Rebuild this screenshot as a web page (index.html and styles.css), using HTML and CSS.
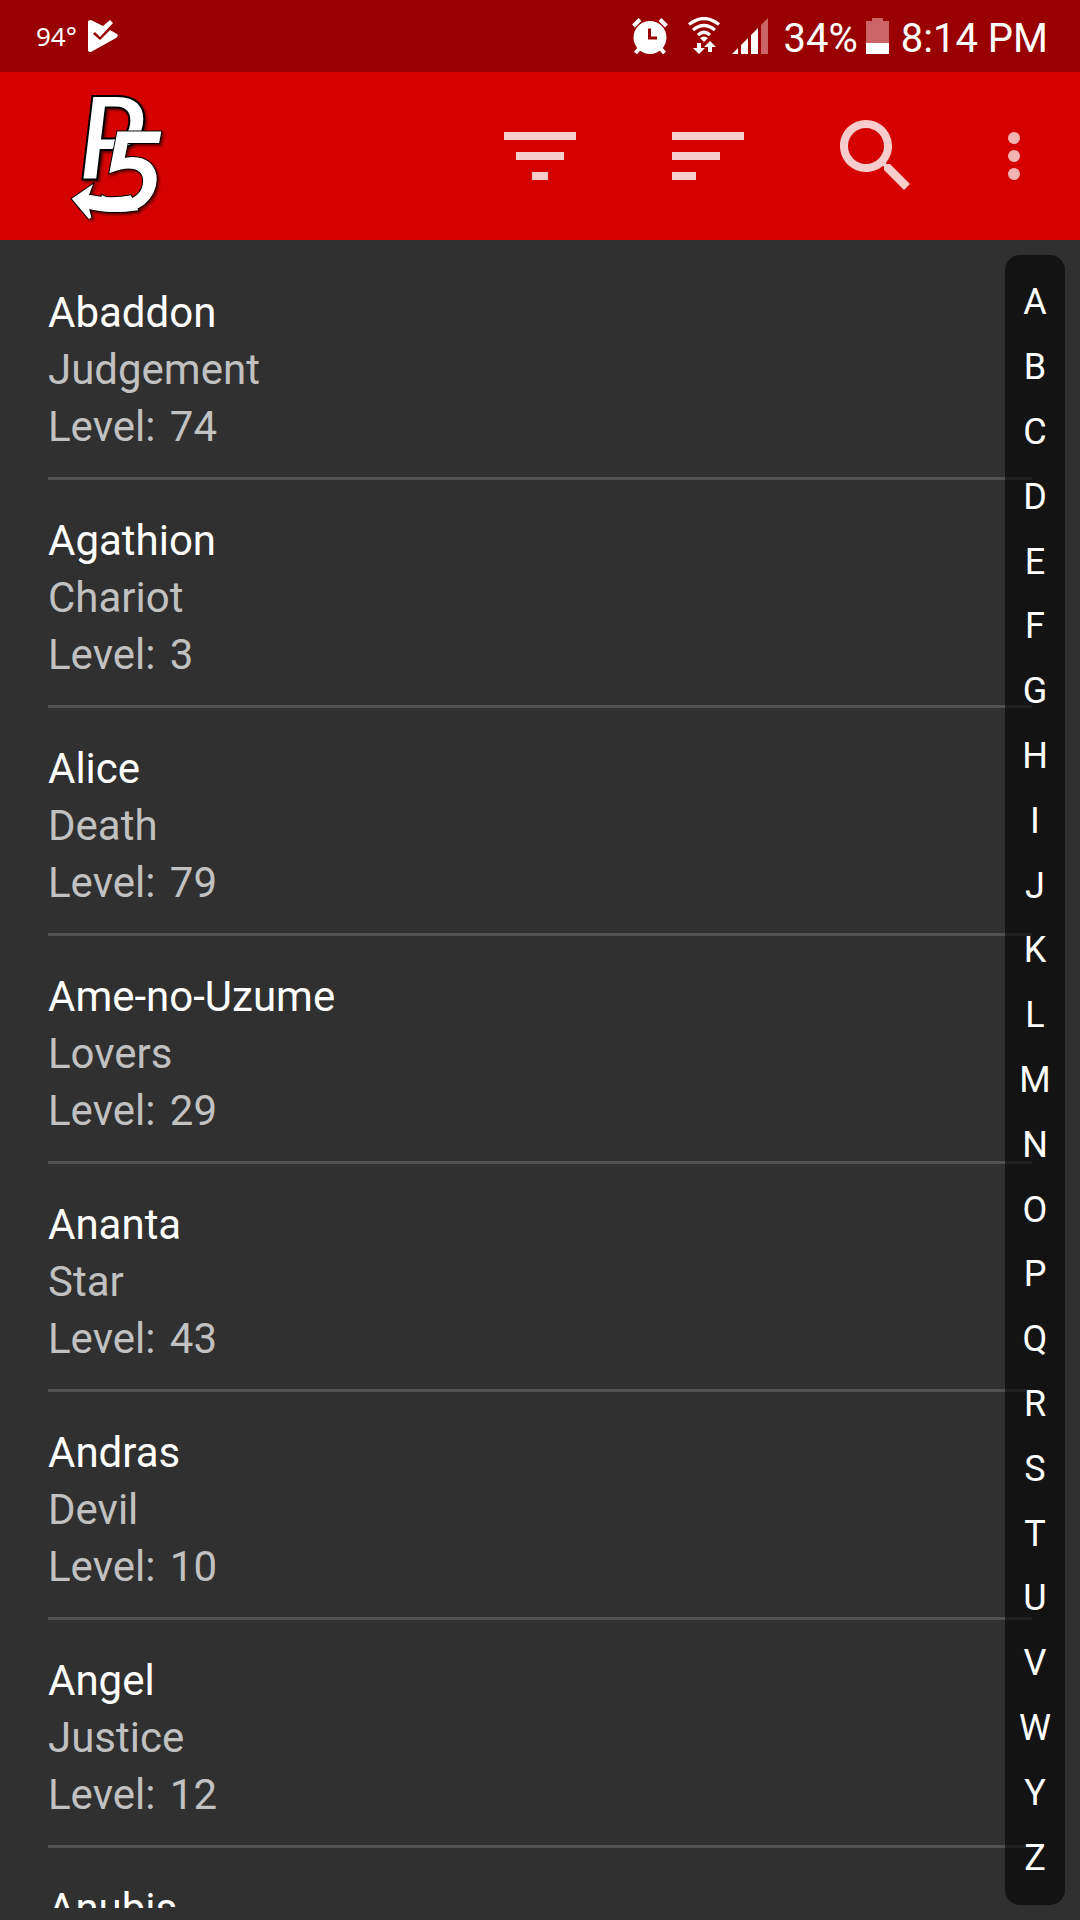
FILE: index.html
```html
<!DOCTYPE html>
<html lang="en">
<head>
  <meta charset="UTF-8" />
  <meta name="viewport" content="width=device-width, initial-scale=1.0" />
  <title>Personas</title>
  <link rel="stylesheet" href="styles.css">
</head>
<body>

  <div class="status-bar">
    <span class="temperature">94°</span>
    <svg class="play" width="30" height="32" viewBox="0 0 30 32">
      <path d="M0 2Q0 0 3 0L15 6L22 0L25 3L12 17L7 12L5 14L12 20L22 10L29 14Q31 16 28 18L3 32Q0 32 0 30Z" fill="#fff" />
    </svg>
    <div class="status-right">
      <svg class="alarm" width="36" height="36" viewBox="0 0 36 36">
        <circle cx="18" cy="19.500" r="16.500" fill="#fff" />
        <path d="M1.500 8L8 1.500M28 1.500L34.500 8M7 31L3.500 35M29 31L32.500 35" stroke="#fff" stroke-width="4" />
        <path d="M17.500 10.500V20H25" fill="none" stroke="#900" stroke-width="3" />
      </svg>
      <svg class="wifi" width="32" height="38" viewBox="0 0 32 38">
        <path d="M1 7.500Q16 -4.500 31 7.500M5 13Q16 4 27 13M10 18Q16 12.500 22 18" fill="none" stroke="#fff" stroke-width="3.200" />
        <path d="M12 21Q16 18 20 21L16 25ZM9 26H13V31H17L11 37L5 31H9ZM20 35V30H16L22 24L28 30H24V35Z" fill="#fff" />
      </svg>
      <svg class="signal" width="36" height="36" viewBox="0 0 36 36">
        <path d="M0 36L6 30V36ZM9 27L16 20V36H9ZM19 17L26 10V36H19Z" fill="#fff" />
        <path d="M29 7L36 0V36H29Z" fill="#c66" />
      </svg>
      <span class="status-text">34%</span>
      <svg class="battery" width="23" height="36" viewBox="0 0 23 36">
        <path d="M6 0H17V3H23V25H0V3H6Z" fill="#c66" />
        <path d="M0 25H23V36H0Z" fill="#fff" />
      </svg>
      <span class="status-text">8:14 PM</span>
    </div>
  </div>

  <header class="app-bar">
    <svg class="logo" width="120" height="140" viewBox="0 0 120 140" role="img" aria-label="P5">
      <defs>
        <g id="five">
          <text x="39" y="123">5</text>
          <path d="M14 113L30 102L27 110Q50 115 70 111L76 123Q50 127 27 121L30 132Z" />
        </g>
      </defs>
      <text class="logo-p" x="18" y="93">P</text>
      <use href="#five" class="logo-five outline" />
      <use href="#five" class="logo-five" />
    </svg>
    <button type="button" class="action" aria-label="Filter">
      <svg width="96" height="96" viewBox="0 0 24 24"><path d="M10 18h4v-2h-4v2zM3 6v2h18V6H3zm3 7h12v-2H6v2z" /></svg>
    </button>
    <button type="button" class="action" aria-label="Sort">
      <svg width="96" height="96" viewBox="0 0 24 24"><path d="M3 18h6v-2H3v2zM3 6v2h18V6H3zm0 7h12v-2H3v2z" /></svg>
    </button>
    <button type="button" class="action" aria-label="Search">
      <svg width="96" height="96" viewBox="0 0 24 24"><path d="M15.500 14h-.79l-.28-.27C15.410 12.590 16 11.110 16 9.500 16 5.910 13.090 3 9.500 3S3 5.910 3 9.500 5.910 16 9.500 16c1.610 0 3.090-.59 4.230-1.570l.27.28v.79l5 4.990L20.490 19l-4.990-5zm-6 0C7.010 14 5 11.990 5 9.500S7.010 5 9.500 5 14 7.010 14 9.500 11.990 14 9.500 14z" /></svg>
    </button>
    <button type="button" class="action more" aria-label="More options">
      <svg width="72" height="72" viewBox="0 0 24 24"><circle cx="12" cy="6" r="2" /><circle cx="12" cy="12" r="2" /><circle cx="12" cy="18" r="2" /></svg>
    </button>
  </header>

  <main class="content">
    <ul class="persona-list">
      <li id="A">
        <h2>Abaddon</h2>
        <p>Judgement</p>
        <p>Level: <span class="level">74</span></p>
      </li>
      <li>
        <h2>Agathion</h2>
        <p>Chariot</p>
        <p>Level: <span class="level">3</span></p>
      </li>
      <li>
        <h2>Alice</h2>
        <p>Death</p>
        <p>Level: <span class="level">79</span></p>
      </li>
      <li>
        <h2>Ame-no-Uzume</h2>
        <p>Lovers</p>
        <p>Level: <span class="level">29</span></p>
      </li>
      <li>
        <h2>Ananta</h2>
        <p>Star</p>
        <p>Level: <span class="level">43</span></p>
      </li>
      <li>
        <h2>Andras</h2>
        <p>Devil</p>
        <p>Level: <span class="level">10</span></p>
      </li>
      <li>
        <h2>Angel</h2>
        <p>Justice</p>
        <p>Level: <span class="level">12</span></p>
      </li>
      <li>
        <h2>Anubis</h2>
      </li>
    </ul>

    <nav class="index" aria-label="Jump to letter">
      <a href="#A">A</a>
      <a href="#B">B</a>
      <a href="#C">C</a>
      <a href="#D">D</a>
      <a href="#E">E</a>
      <a href="#F">F</a>
      <a href="#G">G</a>
      <a href="#H">H</a>
      <a href="#I">I</a>
      <a href="#J">J</a>
      <a href="#K">K</a>
      <a href="#L">L</a>
      <a href="#M">M</a>
      <a href="#N">N</a>
      <a href="#O">O</a>
      <a href="#P">P</a>
      <a href="#Q">Q</a>
      <a href="#R">R</a>
      <a href="#S">S</a>
      <a href="#T">T</a>
      <a href="#U">U</a>
      <a href="#V">V</a>
      <a href="#W">W</a>
      <a href="#Y">Y</a>
      <a href="#Z">Z</a>
    </nav>
  </main>

</body>
</html>
```
FILE: styles.css
```css
* {
  box-sizing: border-box;
}
body {
  display: flex;
  flex-direction: column;
  height: 100vh;
  margin: 0;
  font-family: Roboto, sans-serif;
  background-color: #303030;
  color: white;
}
.status-bar {
  display: flex;
  align-items: center;
  flex: none;
  height: 72px;
  padding: 0 32px 0 36px;
  background-color: #990000;
  font-size: 40px;
}
.temperature {
  width: 52px;
  font-family: "Noto Sans", sans-serif;
  font-size: 26px;
}
.status-right {
  display: flex;
  align-items: center;
  margin-left: auto;
}
.status-text {
  padding-top: 4px;
}
.alarm {
  margin-right: 20px;
}
.wifi {
  margin-right: 12px;
}
.signal {
  margin-right: 16px;
}
.battery {
  margin: 0 12px 0 8px;
}
.app-bar {
  display: flex;
  align-items: center;
  flex: none;
  height: 168px;
  padding: 0 12px 0 60px;
  background-color: #d50000;
}
.logo {
  margin-right: auto;
  fill: white;
  filter: drop-shadow(2px 2px 1px rgba(0, 0, 0, 0.5));
}
.logo-p {
  font: italic 700 114px Lato, sans-serif;
  stroke: black;
  stroke-width: 2px;
}
.logo-five {
  font: italic 104px "DejaVu Sans", sans-serif;
  stroke: white;
  stroke-width: 3px;
}
.outline {
  stroke: black;
  stroke-width: 5px;
}
.action {
  display: flex;
  align-items: center;
  justify-content: center;
  width: 168px;
  height: 168px;
  padding: 0;
  border: none;
  background: none;
  fill: #f7cccc;
  cursor: pointer;
}
.more {
  width: 108px;
  fill: #f2b3b3;
}
.content {
  position: relative;
  flex: 1;
  min-height: 0;
  padding-bottom: 12px;
}
.persona-list {
  height: 100%;
  margin: 0;
  padding: 12px 48px 0;
  overflow: hidden;
  list-style: none;
}
.persona-list li {
  padding: 32px 0 22px;
  border-bottom: 3px solid #515151;
}
.persona-list h2,
.persona-list p {
  margin: 0;
  font-size: 42px;
  font-weight: 400;
  line-height: 57px;
}
.persona-list p {
  color: #c1c1c1;
}
.level {
  margin-left: 4px;
}
.index {
  position: absolute;
  top: 15px;
  right: 15px;
  bottom: 15px;
  display: flex;
  flex-direction: column;
  width: 60px;
  padding: 15px 0;
  border-radius: 15px;
  background-color: rgba(0, 0, 0, 0.6);
}
.index a {
  display: flex;
  flex: 1;
  align-items: center;
  justify-content: center;
  color: white;
  font-size: 36px;
  text-decoration: none;
}
```
